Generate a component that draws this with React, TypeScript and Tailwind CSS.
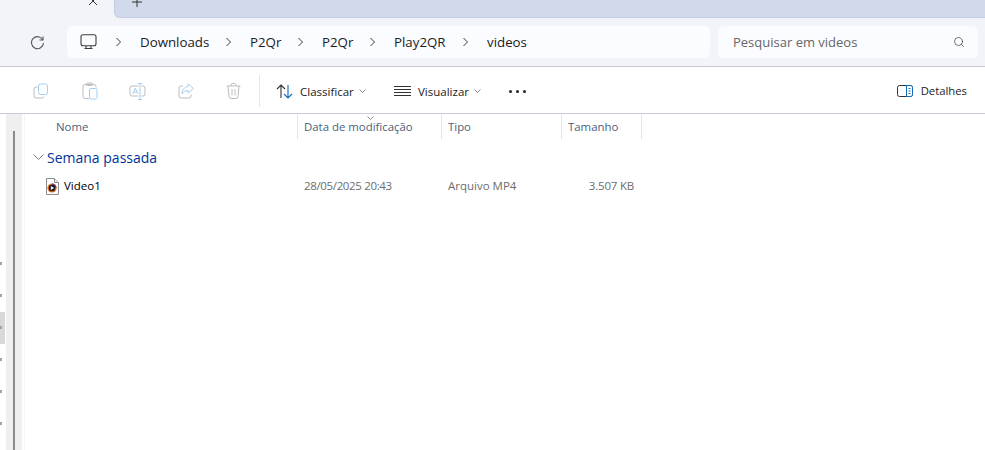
import { Search } from 'lucide-react'

const gray = '#bdbdbd'
const blue = '#a4cff2'

function Chevron() {
  return (
    <svg width="8" height="10" viewBox="0 0 8 10" fill="none" stroke="#3a3a3a" strokeWidth="1">
      <path d="M1.5 1 L5.5 5 L1.5 9" />
    </svg>
  )
}

function SmallDown({ color = '#8a8a8a' }: { color?: string }) {
  return (
    <svg width="7" height="5" viewBox="0 0 7 5" fill="none" stroke={color} strokeWidth="1">
      <path d="M0.5 0.5 L3.5 3.5 L6.5 0.5" />
    </svg>
  )
}

function CopyIcon() {
  return (
    <svg width="16" height="16" viewBox="0 0 16 16" fill="none" strokeWidth="1">
      <path d="M4.5 4 H3 A2 2 0 0 0 1 6 V13 A2 2 0 0 0 3 15 H9 A2 2 0 0 0 11 13.5" stroke={gray} />
      <rect x="5.5" y="1" width="9" height="10.5" rx="2" stroke={blue} />
    </svg>
  )
}

function PasteIcon() {
  return (
    <svg width="16" height="18" viewBox="0 0 16 18" fill="none" strokeWidth="1">
      <path d="M7 16.5 H3 A2 2 0 0 1 1 14.5 V4.5 A2 2 0 0 1 3 2.5 H12 A2 2 0 0 1 14 4.5 V5.5" stroke={gray} />
      <rect x="4.5" y="1" width="6" height="2.5" rx="1" stroke={gray} />
      <rect x="7.5" y="6.5" width="7.5" height="10.5" rx="1.5" stroke={blue} />
    </svg>
  )
}

function RenameIcon() {
  return (
    <svg width="17" height="17" viewBox="0 0 17 17" fill="none" strokeWidth="1">
      <path d="M9.5 3 H3 A2 2 0 0 0 1 5 V11 A2 2 0 0 0 3 13 H9.5 M12.5 3 H14 A2 2 0 0 1 16 5 V11 A2 2 0 0 1 14 13 H12.5" stroke={gray} />
      <path d="M9 0.5 H13 M11 0.5 V16.5 M9 16.5 H13" stroke={blue} />
      <path d="M3.8 11 L6.3 5 L8.8 11 M4.8 9 H7.8" stroke={blue} />
    </svg>
  )
}

function ShareIcon() {
  return (
    <svg width="16" height="16" viewBox="0 0 16 16" fill="none" strokeWidth="1">
      <path d="M5 3 H3 A2 2 0 0 0 1 5 V13 A2 2 0 0 0 3 15 H11 A2 2 0 0 0 13 13 V11.5" stroke={gray} />
      <path d="M10 1 L15.5 5.5 L10 10 V7.5 C7.5 7.5 5.5 8.5 4 11 C4 7.5 6 4 10 3.5 Z" stroke={blue} />
    </svg>
  )
}

function TrashIcon() {
  return (
    <svg width="15" height="16" viewBox="0 0 15 16" fill="none" stroke={gray} strokeWidth="1">
      <path d="M0.5 3 H14.5 M5 3 V2 A1.5 1.5 0 0 1 6.5 0.5 H8.5 A1.5 1.5 0 0 1 10 2 V3" />
      <path d="M2 3 L3 13.5 A2 2 0 0 0 5 15.5 H10 A2 2 0 0 0 12 13.5 L13 3" />
      <path d="M6 6 V12.5 M9 6 V12.5" />
    </svg>
  )
}

function FileIcon() {
  return (
    <svg width="13" height="17" viewBox="0 0 13 17" fill="none">
      <path d="M0.5 0.5 H8.5 L12.5 4.5 V16.5 H0.5 Z" fill="#fff" stroke="#8c8c8c" />
      <path d="M8.5 0.5 V4.5 H12.5" fill="#e8e8e8" stroke="#8c8c8c" />
      <circle cx="6" cy="10" r="4.6" fill="#e0701e" />
      <path d="M6 5.4 A4.6 4.6 0 0 1 10.6 10 H6 Z" fill="#6a3f8c" />
      <circle cx="6" cy="10" r="3.2" fill="#1c1620" />
      <path d="M4.8 8 L8.2 10 L4.8 12 Z" fill="#f6f3ee" />
    </svg>
  )
}

function Column({ label, className }: { label: string; className: string }) {
  return (
    <div className={`h-[25px] border-r border-[#e5e5e5] flex items-center pl-[6px] text-[11.4px] text-[#4c607a] ${className}`}>
      {label}
    </div>
  )
}

export default function App() {
  const crumbs = [
    { label: 'Downloads', w: 'w-[110px]' },
    { label: 'P2Qr', w: 'w-[72px]' },
    { label: 'P2Qr', w: 'w-[72px]' },
    { label: 'Play2QR', w: 'w-[93px]' },
    { label: 'videos', w: '' },
  ]

  return (
    <div className="w-[985px] h-[450px] overflow-hidden bg-white text-[#1b1b1b] font-['Open_Sans','Noto_Sans',sans-serif]">
      {/* Tab strip */}
      <div className="h-[18px] flex bg-[#f3f4f9]">
        <div className="w-[114px] relative">
          <svg className="absolute left-[88px] -top-[4px]" width="10" height="10" viewBox="0 0 10 10" stroke="#333" strokeWidth="1">
            <path d="M1 1 L9 9 M9 1 L1 9" />
          </svg>
        </div>
        <div className="flex-1 bg-[#d1daea] border-l border-b border-[#c3cbdf] rounded-bl-[6px] relative">
          <svg className="absolute left-[16px] -top-[4px]" width="12" height="12" viewBox="0 0 12 12" stroke="#333" strokeWidth="1">
            <path d="M6 1 V11 M1 6 H11" />
          </svg>
        </div>
      </div>

      {/* Address row */}
      <div className="h-[49px] bg-[#f3f4f9] border-b border-[#c6cadc] flex items-start pt-[8px] pr-[7px]">
        <div className="w-[67px] h-[32px] flex items-center pl-[30px]">
          <svg width="15" height="15" viewBox="0 0 15 15" fill="none" stroke="#555" strokeWidth="1.1">
            <path d="M12.9 5 A6 6 0 1 0 13.5 8" />
            <path d="M13 1.5 V5 H9.5" />
          </svg>
        </div>
        <div className="w-[643px] h-[32px] bg-[#fbfcff] rounded-[6px] flex items-center pl-[13px] text-[13.3px]">
          <svg width="17" height="16" viewBox="0 0 17 16" fill="none" stroke="#3d3d3d" strokeWidth="1.1" className="mr-[18px]">
            <rect x="1" y="0.8" width="15" height="11" rx="2" />
            <path d="M4.5 14.5 H12.5 M6 12 V14.5 M11 12 V14.5" />
          </svg>
          {crumbs.map((c, i) => (
            <div key={i} className={`flex items-center ${c.w}`}>
              <span className="w-[25px] shrink-0"><Chevron /></span>
              <span className="pt-[1px]">{c.label}</span>
            </div>
          ))}
        </div>
        <div className="ml-[8px] w-[260px] h-[32px] bg-[#fbfcff] rounded-[6px] flex items-center justify-between pl-[15px] pr-[13px] text-[13px] text-[#666]">
          <span className="pt-[1px]">Pesquisar em videos</span>
          <Search size={12} strokeWidth={1.5} color="#444" />
        </div>
      </div>

      {/* Toolbar */}
      <div className="h-[47px] border-b border-[#c9cbd6] flex items-center pt-[2px] text-[11.5px]">
        <div className="w-[82px] pl-[33px]"><CopyIcon /></div>
        <div className="w-[47px]"><PasteIcon /></div>
        <div className="w-[49px]"><RenameIcon /></div>
        <div className="w-[48px]"><ShareIcon /></div>
        <div className="w-[33px]"><TrashIcon /></div>
        <div className="w-px h-[32px] bg-[#e6e6e6] mr-[16px]" />
        <svg width="17" height="15" viewBox="0 0 17 15" fill="none" strokeWidth="1.1" className="mr-[7px]">
          <path d="M5 14 V1 M1 5 L5 1 L9 5" stroke="#333" />
          <path d="M12 1 V14 M8 10 L12 14 L16 10" stroke="#0f6cbd" />
        </svg>
        <span className="w-[59px] pt-[1px]">Classificar</span>
        <SmallDown />
        <svg width="17" height="10" viewBox="0 0 17 10" stroke="#333" strokeWidth="1" className="ml-[28px] mr-[7px]">
          <path d="M0 0.5 H17 M0 3.5 H17 M0 6.5 H17 M0 9.5 H17" />
        </svg>
        <span className="w-[56px] pt-[1px]">Visualizar</span>
        <SmallDown />
        <div className="ml-[28px] flex gap-[4px]">
          <span className="w-[3px] h-[3px] rounded-full bg-[#222]" />
          <span className="w-[3px] h-[3px] rounded-full bg-[#222]" />
          <span className="w-[3px] h-[3px] rounded-full bg-[#222]" />
        </div>
        <div className="ml-auto mr-[18px] flex items-center gap-[8px]">
          <svg width="16" height="12" viewBox="0 0 16 12" fill="none">
            <rect x="0.5" y="0.5" width="15" height="11" rx="2" stroke="#333" />
            <path d="M9.5 0.5 H13.5 A2 2 0 0 1 15.5 2.5 V9.5 A2 2 0 0 1 13.5 11.5 H9.5 Z" fill="#fff" stroke="#0f6cbd" />
            <path d="M11.5 3.5 H13.5 M11.5 6 H13.5 M11.5 8.5 H13.5" stroke="#0f6cbd" />
          </svg>
          <span className="pt-[1px] text-[11.3px]">Detalhes</span>
        </div>
      </div>

      {/* Body */}
      <div className="h-[336px] flex">
        <div className="w-[6px] relative">
          <div className="absolute left-0 top-[198px] w-[5px] h-[32px] bg-[#d8d8d8]" />
          {[148, 180, 212, 244, 276, 308].map((y) => (
            <span key={y} className="absolute left-0 w-[2px] h-[3px] bg-[#9aa5ad]" style={{ top: y }} />
          ))}
        </div>
        <div className="w-[16px] bg-[#efefef] pl-[7px] pt-[17px]">
          <div className="w-[2px] h-full bg-[#8a8a8a]" />
        </div>
        <div className="flex-1 border-l border-[#f4f4f4] ml-[2px]">
          <div className="flex relative">
            <Column label="Nome" className="w-[273px] pl-[31px]" />
            <Column label="Data de modificação" className="w-[144px]" />
            <Column label="Tipo" className="w-[120px]" />
            <Column label="Tamanho" className="w-[80px]" />
            <div className="absolute left-[342px] top-[2px]"><SmallDown /></div>
          </div>
          <div className="h-[37px] flex items-center pl-[8px]">
            <svg width="11" height="7" viewBox="0 0 11 7" fill="none" stroke="#7a7a7a" strokeWidth="1" className="mr-[3px]">
              <path d="M0.5 0.5 L5.5 5.5 L10.5 0.5" />
            </svg>
            <span className="text-[14px] text-[#003399]">Semana passada</span>
          </div>
          <div className="h-[20px] flex items-center text-[11.5px]">
            <div className="w-[273px] flex items-center pl-[21px]">
              <FileIcon />
              <span className="ml-[5px] text-black">Video1</span>
            </div>
            <span className="w-[144px] pl-[6px] text-[#6d6d6d] tracking-[-0.35px]">28/05/2025 20:43</span>
            <span className="w-[120px] pl-[6px] text-[#6d6d6d]">Arquivo MP4</span>
            <span className="w-[72px] text-right text-[#6d6d6d] tracking-[-0.2px]">3.507 KB</span>
          </div>
        </div>
      </div>
    </div>
  )
}
